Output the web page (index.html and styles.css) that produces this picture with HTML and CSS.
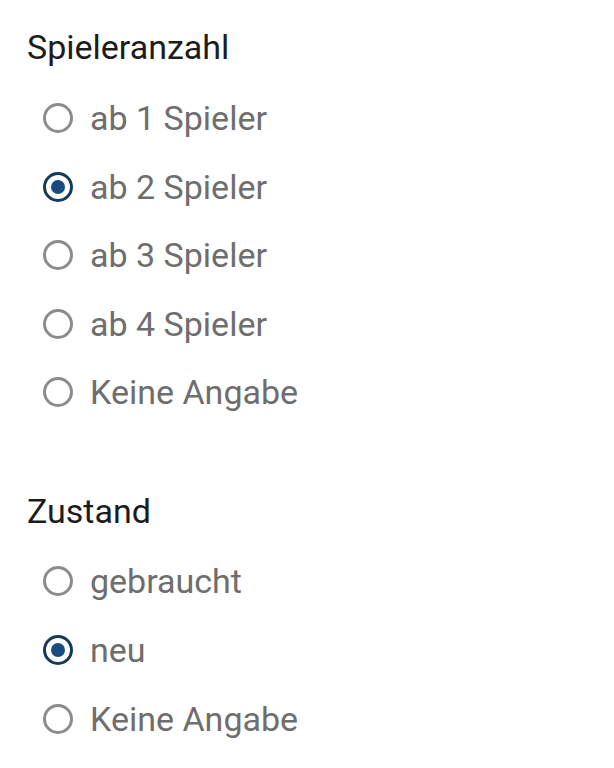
FILE: index.html
```html
<!DOCTYPE html>
<html lang="de">
<head>
<meta charset="utf-8">
<link rel="stylesheet" href="styles.css">
</head>
<body>
<div class="page">
  <section class="group">
    <h2 class="title">Spieleranzahl</h2>
    <div class="options">
      <label class="opt"><span class="radio"></span><span class="lbl">ab 1 Spieler</span></label>
      <label class="opt"><span class="radio on"></span><span class="lbl">ab 2 Spieler</span></label>
      <label class="opt"><span class="radio"></span><span class="lbl">ab 3 Spieler</span></label>
      <label class="opt"><span class="radio"></span><span class="lbl">ab 4 Spieler</span></label>
      <label class="opt"><span class="radio"></span><span class="lbl">Keine Angabe</span></label>
    </div>
  </section>
  <section class="group second">
    <h2 class="title">Zustand</h2>
    <div class="options">
      <label class="opt"><span class="radio"></span><span class="lbl">gebraucht</span></label>
      <label class="opt"><span class="radio on"></span><span class="lbl">neu</span></label>
      <label class="opt"><span class="radio"></span><span class="lbl">Keine Angabe</span></label>
    </div>
  </section>
</div>
</body>
</html>
```
FILE: styles.css
```css
html, body {
  margin: 0;
  padding: 0;
  background: #ffffff;
}
.page {
  font-family: Roboto, "Noto Sans", sans-serif;
  padding: 27px 0 0 27px;
}
.title {
  margin: 0;
  font-size: 34px;
  font-weight: 400;
  line-height: 40px;
  color: #1c1c1c;
}
.options {
  margin-top: 17px;
  display: flex;
  flex-direction: column;
}
.second {
  margin-top: 64px;
}
.second .options {
  margin-top: 16px;
}
.second .opt {
  height: 69px;
}
.opt {
  display: flex;
  align-items: center;
  height: 68.5px;
  gap: 17px;
  padding-left: 16px;
}
.radio {
  box-sizing: border-box;
  width: 30px;
  height: 30px;
  border-radius: 50%;
  border: 3px solid #8c8c8c;
  display: flex;
  align-items: center;
  justify-content: center;
  flex: none;
}
.radio.on {
  border-color: #163a5a;
}
.radio.on::after {
  content: "";
  width: 14px;
  height: 14px;
  border-radius: 50%;
  background: #1a4b80;
}
.lbl {
  font-size: 34px;
  line-height: 40px;
  color: #6e6e6e;
}
```
